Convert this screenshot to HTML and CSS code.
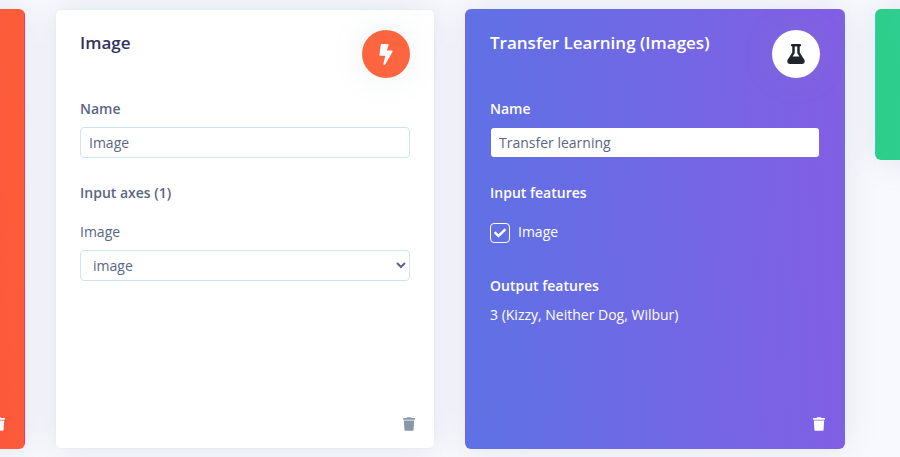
FILE: index.html
```html
<!DOCTYPE html>
<html lang="en">
<head>
  <meta charset="UTF-8" />
  <meta name="viewport" content="width=device-width, initial-scale=1.0"/>
  <title>Impulse design</title>
  <link rel="stylesheet" href="styles.css">
</head>
<body>

  <div class="blocks">
    <div class="card card-orange">
      <button class="delete" type="button">
        <svg viewBox="0 0 448 512"><path d="M432 32H312l-9.4-18.7A24 24 0 0 0 281.1 0H166.8a23.72 23.72 0 0 0-21.4 13.3L136 32H16A16 16 0 0 0 0 48v32a16 16 0 0 0 16 16h416a16 16 0 0 0 16-16V48a16 16 0 0 0-16-16zM53.2 467a48 48 0 0 0 47.9 45h245.8a48 48 0 0 0 47.9-45L416 128H32z"/></svg>
      </button>
    </div>

    <div class="card card-white">
      <div class="card-header">
        <h3 class="card-title">Image</h3>
        <div class="icon-circle icon-orange">
          <svg class="icon-bolt" viewBox="0 0 320 512"><path d="M296 160H180.6l42.6-129.8C227.2 15 215.7 0 200 0H56C44 0 33.8 8.9 32.2 20.8l-32 240C-1.7 275.2 9.5 288 24 288h118.7L96.6 482.5c-3.6 15.2 8 29.5 23.3 29.5 8.4 0 16.4-4.4 20.8-12l176-304c9.3-15.9-2.2-36-20.7-36z"/></svg>
        </div>
      </div>
      <label class="field-label">Name</label>
      <input class="field" type="text" value="Image">
      <div class="field-label section">Input axes (1)</div>
      <label class="plain-label">Image</label>
      <select class="field field-select">
        <option>image</option>
      </select>
      <button class="delete" type="button">
        <svg viewBox="0 0 448 512"><path d="M432 32H312l-9.4-18.7A24 24 0 0 0 281.1 0H166.8a23.72 23.72 0 0 0-21.4 13.3L136 32H16A16 16 0 0 0 0 48v32a16 16 0 0 0 16 16h416a16 16 0 0 0 16-16V48a16 16 0 0 0-16-16zM53.2 467a48 48 0 0 0 47.9 45h245.8a48 48 0 0 0 47.9-45L416 128H32z"/></svg>
      </button>
    </div>

    <div class="card card-purple">
      <div class="card-header">
        <h3 class="card-title">Transfer Learning (Images)</h3>
        <div class="icon-circle icon-white">
          <svg class="icon-flask" viewBox="0 0 448 512"><path d="M437.2 403.5L320 215V64h8c13.3 0 24-10.7 24-24V24c0-13.3-10.7-24-24-24H120c-13.3 0-24 10.7-24 24v16c0 13.3 10.7 24 24 24h8v151L10.8 403.5C-18.5 450.6 15.3 512 70.9 512h306.2c55.7 0 89.4-61.5 60.1-108.5zM137.9 320l48.2-77.6c3.7-5.2 5.8-11.6 5.8-18.4V64h64v160c0 6.9 2.2 13.2 5.8 18.4l48.2 77.6h-172z"/></svg>
        </div>
      </div>
      <label class="field-label">Name</label>
      <input class="field" type="text" value="Transfer learning">
      <div class="field-label section">Input features</div>
      <div class="check-row">
        <span class="check-box">
          <svg viewBox="0 0 512 512"><path d="M173.898 439.404l-166.4-166.4c-9.997-9.997-9.997-26.206 0-36.204l36.203-36.204c9.997-9.998 26.207-9.998 36.204 0L192 312.69 432.095 72.596c9.997-9.997 26.207-9.997 36.204 0l36.203 36.204c9.997 9.997 9.997 26.206 0 36.204l-294.4 294.401c-9.998 9.997-26.207 9.997-36.204-.001z"/></svg>
        </span>
        <span>Image</span>
      </div>
      <div class="field-label output-label">Output features</div>
      <div class="output-text">3 (Kizzy, Neither Dog, Wilbur)</div>
      <button class="delete" type="button">
        <svg viewBox="0 0 448 512"><path d="M432 32H312l-9.4-18.7A24 24 0 0 0 281.1 0H166.8a23.72 23.72 0 0 0-21.4 13.3L136 32H16A16 16 0 0 0 0 48v32a16 16 0 0 0 16 16h416a16 16 0 0 0 16-16V48a16 16 0 0 0-16-16zM53.2 467a48 48 0 0 0 47.9 45h245.8a48 48 0 0 0 47.9-45L416 128H32z"/></svg>
      </button>
    </div>

    <div class="card card-green"></div>
  </div>

</body>
</html>
```

FILE: styles.css
```css
* {
  box-sizing: border-box;
}

html,
body {
  height: 100%;
}

body {
  background: #f8f9fe;
  font-family: 'Open Sans', sans-serif;
  font-size: 14px;
  line-height: 21px;
  color: #5a6685;
  margin: 0;
  overflow: hidden;
}

.blocks {
  display: flex;
  align-items: flex-start;
  gap: 30px;
  padding-top: 9px;
  margin-left: -355px;
  width: 1700px;
}

.card {
  display: flex;
  flex-direction: column;
  flex: none;
  width: 380px;
  height: 440px;
  padding: 20px 24px 17px;
  background: #fff;
  border: 1px solid transparent;
  border-radius: 6px;
  box-shadow: 0 0 32px 0 rgba(136, 152, 170, 0.2);
}

.card-white {
  background-clip: padding-box;
  border-color: rgba(136, 152, 170, 0.03);
}

.card-orange {
  background: linear-gradient(87deg, #f5365c, #fd5d38);
  color: #fff;
}

.card-purple {
  background: linear-gradient(87deg, #5e72e4, #825ee4);
  color: #fff;
}

.card-green {
  height: 151px;
  background: linear-gradient(87deg, #2dce89, #2dcecc);
}

.card-header {
  display: flex;
  justify-content: space-between;
  align-items: flex-start;
  margin-bottom: 20px;
}

.card-title {
  margin: 0;
  font-size: 17px;
  line-height: 26px;
  font-weight: 600;
  color: #32325d;
}

.card-purple .card-title {
  color: #fff;
}

.icon-circle {
  display: flex;
  align-items: center;
  justify-content: center;
  width: 48px;
  height: 48px;
  border-radius: 50%;
  box-shadow: 0 0 32px 0 rgba(136, 152, 170, 0.15);
}

.icon-orange {
  background: #fd6540;
  fill: #fff;
}

.icon-white {
  background: #fff;
  fill: #212529;
}

.icon-bolt {
  width: 14px;
  height: 21px;
}

.icon-flask {
  width: 18px;
  height: 20px;
}

.field-label {
  display: block;
  font-weight: 600;
  margin-bottom: 8px;
}

.section {
  margin-top: 24px;
  margin-bottom: 18px;
}

.plain-label {
  display: block;
  margin-bottom: 8px;
}

.field {
  display: block;
  width: 100%;
  height: 31px;
  padding: 4px 8px;
  font-family: inherit;
  font-size: 14px;
  color: #5a6685;
  background: #fff;
  border: 1px solid #cee4f3;
  border-radius: 4px;
  outline: none;
}

.card-purple .field {
  background-clip: padding-box;
  border-color: transparent;
}

.check-row {
  display: flex;
  align-items: center;
  gap: 8px;
  height: 21px;
}

.check-box {
  display: flex;
  align-items: center;
  justify-content: center;
  width: 20px;
  height: 20px;
  margin-top: 2px;
  border: 1px solid #fff;
  border-radius: 4px;
  fill: #fff;
}

.check-box svg {
  width: 12px;
  height: 12px;
}

.output-label {
  margin-top: 33px;
  margin-bottom: 8px;
}

.delete {
  display: block;
  align-self: flex-end;
  margin-top: auto;
  margin-right: -5px;
  padding: 0;
  line-height: 0;
  background: none;
  border: none;
  fill: #8898aa;
  cursor: pointer;
}

.delete svg {
  width: 12px;
  height: 14px;
}

.card-orange .delete,
.card-purple .delete {
  fill: #fff;
}
```
